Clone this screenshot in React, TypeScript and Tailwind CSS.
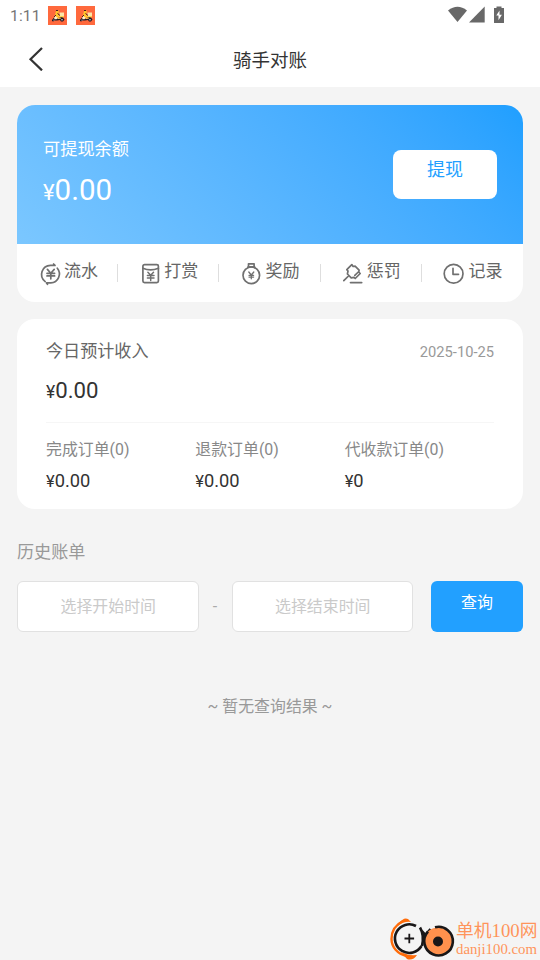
import React from 'react';

const CourierBadge = () => (
  <svg className="h-[19px] w-[19px]" viewBox="0 0 19 19">
    <rect width="19" height="19" fill="#ff693d" />
    <path d="M11.500 6.500H16v4h-4.500z" fill="#fbe6a8" />
    <path d="M8 5l2-1 1 2-1 2 2 2-2 2H6l1-3z" fill="#ffc32b" />
    <path d="M11 10h5l-1 2h-3z" fill="#ffd34d" />
    <path d="M4 14l2-2.500 2 .5 3 1 1-2 3 .5 1.500 2-1.500 2h-2l-1-1.500-3 .5H7l-2 1-1-.5z" fill="#201722" />
    <path d="M7 10l3 2-2 1.500-2-1z" fill="#fff1d0" />
    <path d="M9.500 7.500l2.500 2M8 4.500h2M6 11l2-2" stroke="#4b1b20" strokeWidth="1" />
    <path d="M10 12.500l3-.5" stroke="#ffd34d" strokeWidth="1.200" />
    <circle cx="6" cy="14" r=".6" fill="#fff" />
    <circle cx="14" cy="13.800" r=".7" fill="#fff" />
  </svg>
);

const iconProps = {
  className: 'h-6 w-6 shrink-0',
  viewBox: '0 0 24 24',
  fill: 'none',
  stroke: '#707070',
  strokeWidth: 1.7,
  strokeLinecap: 'round' as const,
  strokeLinejoin: 'round' as const,
};

const FlowIcon = () => (
  <svg {...iconProps}>
    <path d="M7.200 19.600A9 9 0 0 1 12.500 3.400H17L15.600 2M19.300 6.200A9 9 0 0 1 12.800 20.900H8.500L9.500 22.300" />
    <path d="M9.400 7.400l3.400 3.800 3.400-3.800M12.800 11.200v5.600M9 11.300h7.600M9 13.900h7.600" />
  </svg>
);

const RewardIcon = () => (
  <svg {...iconProps}>
    <rect x="4.900" y="2.700" width="15.500" height="18" rx="1.600" />
    <path d="M4.900 6.300Q12.600 9.600 20.400 6.300" />
    <path d="M9.900 10.200l2.800 3 2.800-3M12.700 13.200v5.300M9.400 13.500H16M9.400 15.900H16" strokeWidth="1.500" />
  </svg>
);

const BonusIcon = () => (
  <svg {...iconProps}>
    <circle cx="12.300" cy="13.300" r="8.300" />
    <path d="M8.800 5.500l.7-1.400V1.800h5.600v2.300l.7 1.400M9 4.800h6.600" />
    <path d="M9.800 10l2.500 3 2.500-3M12.300 13v3.800M10 13.300h4.600M10 15.100h4.600" strokeWidth="1.300" />
  </svg>
);

const PenaltyIcon = () => (
  <svg {...iconProps}>
    <path d="M10.800 2.600L5.800 7.600 7 9l-.6 3 3.800 3.800 2.800-.5 1.200 1.200 5-5-1.400-1.400.3-1.900-4-4-2 .3zM8 13.500L2.800 18.700M17.300 10l-3.500 3.300" />
    <path d="M9.600 20.600h11" strokeWidth="1.900" />
  </svg>
);

const RecordIcon = () => (
  <svg {...iconProps}>
    <circle cx="11.600" cy="11.700" r="9.400" />
    <path d="M11 6.300v6h5.500" />
  </svg>
);

const actions = [
  { label: '流水', Icon: FlowIcon, shift: 'pl-[2px]' },
  { label: '打赏', Icon: RewardIcon, shift: 'pl-0' },
  { label: '奖励', Icon: BonusIcon, shift: 'pl-0' },
  { label: '惩罚', Icon: PenaltyIcon, shift: 'pl-0' },
  { label: '记录', Icon: RecordIcon, shift: 'pl-0' },
];

const orders = [
  { label: '完成订单(0)', value: '0.00' },
  { label: '退款订单(0)', value: '0.00' },
  { label: '代收款订单(0)', value: '0' },
];

const DateField = ({ text }: { text: string }) => (
  <div className="flex h-[51px] flex-1 items-center justify-center rounded-[6px] border border-[#e1e1e1] bg-white pl-px text-[15.900px] leading-6 text-[#cacaca]">
    {text}
  </div>
);

export default function App() {
  return (
    <div className="relative flex h-[960px] w-[540px] flex-col overflow-hidden bg-[#f4f4f4] font-['Roboto','Noto_Sans_CJK_SC',sans-serif] text-[#333]">
      <header className="h-[87px] bg-white">
        <div className="flex h-8 items-center justify-between pl-[10px] pr-[35px]">
          <div className="flex items-center">
            <span className="w-[38px] text-[15.500px] leading-5 tracking-[0.200px] text-[#757575]">1:11</span>
            <div className="mb-px flex gap-[9px]">
              <CourierBadge />
              <CourierBadge />
            </div>
          </div>
          <svg className="mb-[3px] h-[18px] w-[57px]" viewBox="0 0 57 18" fill="#686868">
            <path d="M0 4.500Q9.500-3 19 4.500L9.500 16z" />
            <path d="M21 16.400L36.700.4v16z" />
            <path d="M46 2h2.500V.5h5V2H56v14.500q0 .5-.5.500h-9q-.5 0-.5-.5V2z" />
            <path d="M51.500 4.500l-3.200 5h2.200v4.700l3.400-5.400h-2.400z" fill="#fff" />
          </svg>
        </div>
        <div className="grid h-[55px] grid-cols-[72px_1fr_72px] items-center">
          <svg className="mb-[2px] ml-6 h-6 w-6" viewBox="0 0 24 24" fill="none" stroke="#333" strokeWidth="2.200">
            <path d="M18 1L6.500 12.200 18 23.400" />
          </svg>
          <h1 className="pt-[2px] text-center text-[18.500px] leading-7">骑手对账</h1>
        </div>
      </header>

      <main className="flex flex-col px-[17px] pt-[18px]">
        <section className="overflow-hidden rounded-[18px] bg-white">
          <div className="flex h-[139px] items-center justify-between bg-linear-45 from-[#7bc7ff] to-[#1f9fff] px-[26px] text-white">
            <div className="flex flex-col pb-[2px]">
              <span className="text-[17.200px] leading-6">可提现余额</span>
              <span className="mt-[11px] text-[29.500px] leading-9"><span className="text-[22px]">¥</span>0.00</span>
            </div>
            <button className="flex h-[49px] w-[104px] justify-center rounded-[8px] bg-white pt-[8px] text-[18px] leading-6 text-[#229fff]">提现</button>
          </div>
          <div className="grid h-[58px] grid-cols-5">
            {actions.map(({ label, Icon, shift }, i) => (
              <div key={label} className="flex items-start justify-between">
                <div className={`flex flex-1 justify-center gap-[2px] pt-[15px] ${shift}`}>
                  <div className="pt-[3px]"><Icon /></div>
                  <span className="text-[17px] leading-6 text-[#666]">{label}</span>
                </div>
                {i < 4 && <div className="mt-5 h-[18px] w-px bg-[#dedede]" />}
              </div>
            ))}
          </div>
        </section>

        <section className="mt-[17px] h-[190px] rounded-[18px] bg-white px-[29px] pt-[19px]">
          <div className="flex items-center justify-between">
            <span className="text-[17.100px] leading-6 text-[#666]">今日预计收入</span>
            <span className="pt-[2px] text-[14.700px] leading-6 text-[#999]">2025-10-25</span>
          </div>
          <div className="mt-[10px] h-[49px] border-b border-[#f6f6f6] text-[22.200px] leading-8"><span className="text-[17.500px]">¥</span>0.00</div>
          <div className="grid grid-cols-3 pt-[15px]">
            {orders.map(({ label, value }) => (
              <div key={label} className="flex flex-col">
                <span className="text-[15.900px] leading-6 text-[#888]">{label}</span>
                <span className="mt-[7px] text-[18.300px] leading-6"><span className="text-[16.500px]">¥</span>{value}</span>
              </div>
            ))}
          </div>
        </section>

        <h2 className="mt-[31px] text-[17.100px] leading-6 text-[#999]">历史账单</h2>
        <div className="mt-[17px] flex items-center">
          <DateField text="选择开始时间" />
          <span className="w-[33px] text-center text-[16px] text-[#aaa]">-</span>
          <DateField text="选择结束时间" />
          <button className="ml-[18px] flex h-[51px] w-[92px] justify-center rounded-[6px] bg-[#22a0ff] pt-[10px] text-[16px] leading-6 text-white">查询</button>
        </div>
        <p className="mt-[63px] text-center text-[15.900px] leading-6 text-[#999]">~ 暂无查询结果 ~</p>
      </main>

      <div className="absolute bottom-0 right-[2px] flex h-[43px] w-[148px] items-start">
        <svg className="h-[43px] w-[66px] shrink-0" viewBox="0 0 66 43" fill="none">
          <path d="M13 4C5 8 1.500 15 1.500 22c0 8 6 15 15 17" stroke="#ff6c0a" strokeWidth="2.400" />
          <path d="M8 7Q14-.5 18 2l3 3q-7-1-13 4zM10 34q6 5 17 4-4 6-10 4z" fill="#ff6c0a" />
          <path d="M26 9A14.300 14.300 0 1 0 31.500 29" stroke="#191718" strokeWidth="2.600" />
          <path d="M30 10.500Q34.500 18 32 29M31 13l4.500 5 5-6" stroke="#191718" strokeWidth="2.600" />
          <circle cx="48" cy="24.500" r="14" fill="#ff914d" />
          <path d="M45 10.300A14.300 14.300 0 1 1 38 14.500" stroke="#191718" strokeWidth="2.600" />
          <circle cx="48" cy="24.500" r="5" fill="#191718" />
          <path d="M19.300 16.700v9.600M14.500 21.500h9.600" stroke="#191718" strokeWidth="1.800" />
        </svg>
        <div className="flex flex-col font-['Liberation_Serif','Noto_Sans_CJK_SC',serif] text-[#ff945b]">
          <span className="whitespace-nowrap pt-px text-[17.800px] leading-[26px]">单机<span className="text-[18.800px]">100</span>网</span>
          <span className="-mt-[4px] whitespace-nowrap text-[14.800px] leading-[18px]">danji100.com</span>
        </div>
      </div>
    </div>
  );
}
